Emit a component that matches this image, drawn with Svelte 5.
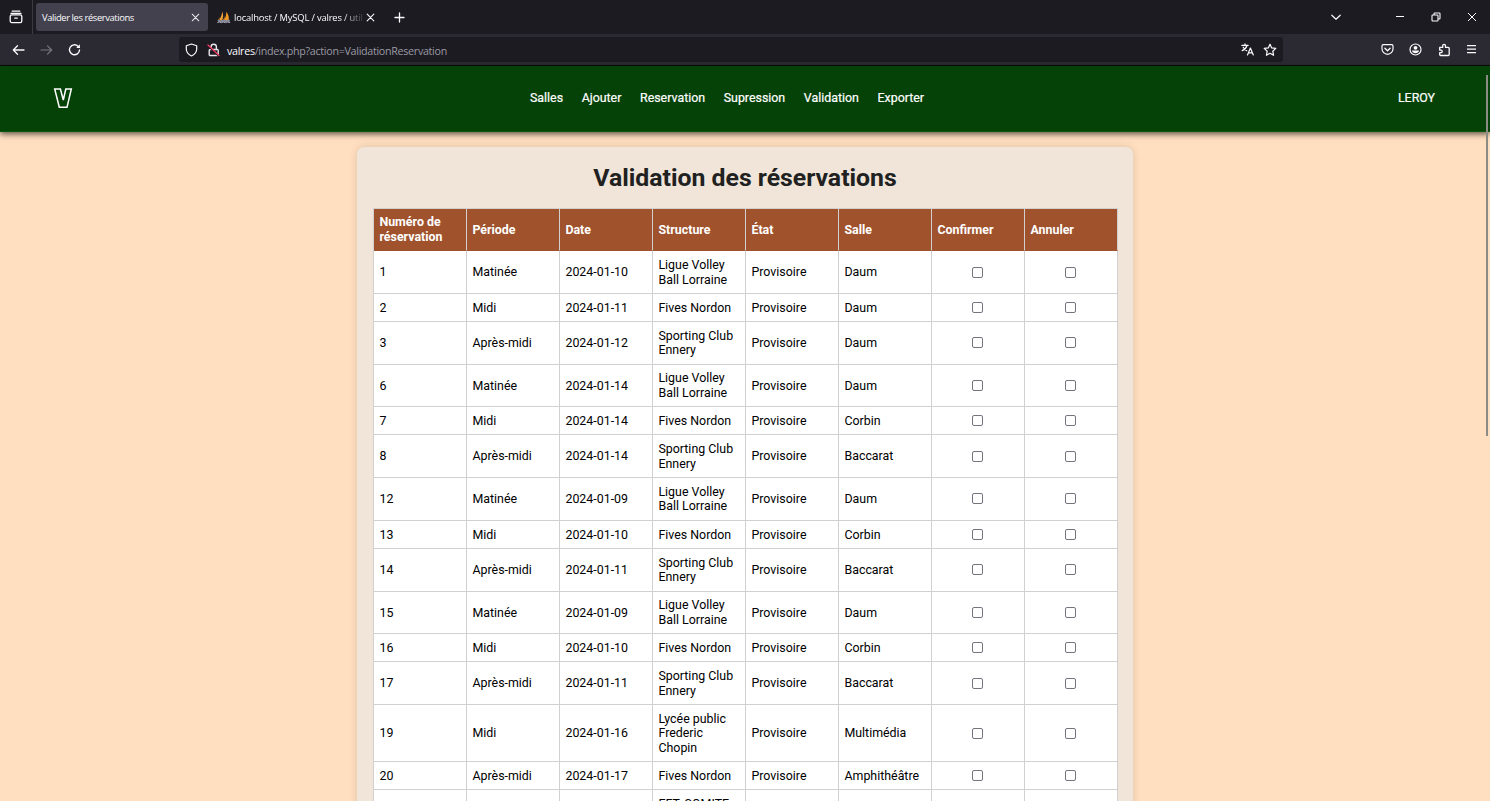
<script>
  const nav = ['Salles', 'Ajouter', 'Reservation', 'Supression', 'Validation', 'Exporter'];
  const heads = ['Numéro de réservation', 'Période', 'Date', 'Structure', 'État', 'Salle', 'Confirmer', 'Annuler'];
  const L = ['Ligue Volley', 'Ball Lorraine'];
  const F = ['Fives Nordon'];
  const S = ['Sporting Club', 'Ennery'];
  const rows = [
    ['1', 'Matinée', '2024-01-10', L, 'Daum'],
    ['2', 'Midi', '2024-01-11', F, 'Daum'],
    ['3', 'Après-midi', '2024-01-12', S, 'Daum'],
    ['6', 'Matinée', '2024-01-14', L, 'Daum'],
    ['7', 'Midi', '2024-01-14', F, 'Corbin'],
    ['8', 'Après-midi', '2024-01-14', S, 'Baccarat'],
    ['12', 'Matinée', '2024-01-09', L, 'Daum'],
    ['13', 'Midi', '2024-01-10', F, 'Corbin'],
    ['14', 'Après-midi', '2024-01-11', S, 'Baccarat'],
    ['15', 'Matinée', '2024-01-09', L, 'Daum'],
    ['16', 'Midi', '2024-01-10', F, 'Corbin'],
    ['17', 'Après-midi', '2024-01-11', S, 'Baccarat'],
    ['19', 'Midi', '2024-01-16', ['Lycée public', 'Frederic', 'Chopin'], 'Multimédia'],
    ['20', 'Après-midi', '2024-01-17', F, 'Amphithéâtre']
  ];
</script>

<div class="window">
  <div class="tabs">
    <div class="view">
      <svg width="14" height="14" viewBox="0 0 14 14" fill="none" stroke="#fbfbfe" stroke-width="1.3" stroke-linecap="round"><path d="M3.2 1.2h7.6M2 3.4h10" /><rect x="1.2" y="4.9" width="11.6" height="7.7" rx="1.6" /><path d="M5.8 8.2h2.4" /></svg>
    </div>
    <div class="tab active">
      <span class="label">Valider les réservations</span>
      <svg class="close" width="9" height="9" viewBox="0 0 9 9" stroke="#e8e8ee" stroke-width="1.05" stroke-linecap="round"><path d="M1.2 1.2l6.6 6.6M7.8 1.2L1.2 7.8" /></svg>
    </div>
    <div class="tab second">
      <svg class="fav" width="14" height="13" viewBox="0 0 14 13"><path d="M5.4.6C6.4 3.7 6.3 6.3 5.3 9.3l-3.2.2C3.6 7 4.9 4.2 5.4.6z" fill="#f0a23a" /><path d="M9.4.8c2.2 3 2.6 5.6 2.4 8.4L7 9C8.7 6.6 9.3 4 9.4.8z" fill="#f39a20" /><path d="M2.8 3.5C3 6 2 8 .7 9.4L2.4 9.3zM7.4 2.5c.2 2.5-.1 4.700-1.300 6.500l1.600.1z" fill="#d98a2c" /><path d="M.4 9.2l12.600-.4-.5 2.200H1.200z" fill="#85869a" /><path d="M.3 11.700l2-.7 2 .7 2-.7 2 .7 2-.7 2.800.7" fill="none" stroke="#a6a5af" /></svg>
      <span class="label fade">localhost / MySQL / valres / util</span>
      <svg class="close" width="9" height="9" viewBox="0 0 9 9" stroke="#fbfbfe" stroke-width="1.1" stroke-linecap="round"><path d="M1.2 1.2l6.6 6.6M7.8 1.2L1.2 7.8" /></svg>
    </div>
    <svg class="plus" width="11" height="11" viewBox="0 0 11 11" stroke="#fbfbfe" stroke-width="1.3" stroke-linecap="round"><path d="M5.5 1v9M1 5.5h9" /></svg>
    <div class="controls">
      <svg width="12" height="12" viewBox="0 0 12 12" fill="none" stroke="#fbfbfe" stroke-width="1.2" stroke-linecap="round" stroke-linejoin="round"><path d="M1.8 4.2L6 8.2l4.2-4" /></svg>
      <svg class="min" width="10" height="10" viewBox="0 0 10 10" stroke="#fbfbfe"><path d="M1 4.5h8" /></svg>
      <svg class="max" width="10" height="10" viewBox="0 0 10 10" fill="none" stroke="#fbfbfe" stroke-width="1.1"><rect x="1" y="3" width="6" height="6" rx=".8" /><path d="M3 3V1.8q0-.8.8-.8h4.4q.8 0 .8.8v4.4q0 .8-.8.8H7" /></svg>
      <svg class="quit" width="10" height="10" viewBox="0 0 10 10" stroke="#fbfbfe"><path d="M1 1l8 8M9 1L1 9" /></svg>
    </div>
  </div>

  <div class="toolbar">
    <svg class="back" width="13" height="12" viewBox="0 0 13 12" fill="none" stroke="#fbfbfe" stroke-width="1.3" stroke-linecap="round" stroke-linejoin="round"><path d="M12 6H1.3M5.5 1.8L1.3 6l4.2 4.2" /></svg>
    <svg class="fwd" width="13" height="12" viewBox="0 0 13 12" fill="none" stroke="#77767f" stroke-width="1.2" stroke-linecap="round" stroke-linejoin="round"><path d="M1 6h10.7M7.5 1.8L11.7 6l-4.2 4.2" /></svg>
    <svg class="reload" width="13" height="13" viewBox="0 0 13 13" fill="none" stroke="#fbfbfe" stroke-width="1.4" stroke-linecap="round"><path d="M11.5 7A5 5 0 1 1 10 3.2L11 4.2" /><path d="M11.9 1.2v3.7H8.2z" fill="#fbfbfe" stroke="none" /></svg>
    <div class="url">
      <svg class="shield" width="13" height="14" viewBox="0 0 13 14" fill="none" stroke="#fbfbfe" stroke-width="1.2" stroke-linejoin="round"><path d="M6.5 1L11.7 2.8V6c0 3-2 5.4-5.2 7C3.3 11.4 1.3 9 1.3 6V2.8z" /></svg>
      <svg class="lock" width="13" height="14" viewBox="0 0 13 14" fill="none" stroke="#e6e6ec" stroke-width="1.4"><path d="M4 6.500V4a2.700 2.700 0 0 1 5.400 0v2.500" /><rect x="2.200" y="6.500" width="9" height="6" rx="1" /><path d="M1 3l10.500 10" stroke="#1c1b22" stroke-width="1.300" /><path d="M1 2l11 10.500" stroke="#f03a60" stroke-width="1.300" stroke-linecap="round" /></svg>
      <span class="address"><b>valres</b>/index.php?action=ValidationReservation</span>
      <svg class="translate" width="13" height="13" viewBox="0 0 13 13" fill="none" stroke="#fbfbfe" stroke-width="1.2" stroke-linecap="round" stroke-linejoin="round"><path d="M.8 2.300h6.400M4 .8v1.500M6 2.500C5.400 4.800 3.500 6.600 1.200 7.600M2.200 4.200c.8 1.500 2 2.600 3.500 3.400M6.500 12L9.400 5l2.900 7M7.500 9.900h3.800" /></svg>
      <svg class="star" width="14" height="14" viewBox="0 0 14 14" fill="none" stroke="#fbfbfe" stroke-width="1.2" stroke-linejoin="round"><path d="M7 1.200l1.700 3.700 4.100.5-3 2.800.8 4.100L7 10.300l-3.600 2 .8-4.100-3-2.800 4.100-.5z" /></svg>
    </div>
    <div class="tools">
      <svg width="13" height="13" viewBox="0 0 13 13" fill="none" stroke="#fbfbfe" stroke-width="1.2" stroke-linecap="round" stroke-linejoin="round"><path d="M2.200 1.700h8.600q1.200 0 1.200 1.200v2.900a5.500 5.500 0 0 1-11 0V2.900q0-1.200 1.200-1.200z" /><path d="M3.900 5.200l2.600 2.500 2.600-2.500" stroke-width="1.4" /></svg>
      <svg width="13" height="13" viewBox="0 0 13 13" fill="none" stroke="#fbfbfe" stroke-width="1.2"><circle cx="6.5" cy="6.5" r="5.5" /><circle cx="6.5" cy="4.8" r="1.9" fill="#fbfbfe" stroke="none" /><path d="M3 7.500h7c0 1.600-1.600 2.800-3.500 2.800S3 9.100 3 7.500z" fill="#fbfbfe" stroke="none" /></svg>
      <svg width="13" height="14" viewBox="0 0 13 14" fill="none" stroke="#fbfbfe" stroke-width="1.3" stroke-linejoin="round"><path d="M1.700 4.400h3V2.700a1.400 1.400 0 0 1 2.800 0v1.700h2.700q1 0 1 1v6.100q0 1-1 1H2.700q-1 0-1-1V9.700h1.200a1.300 1.300 0 0 0 0-2.600H1.700z" /></svg>
      <svg width="11" height="11" viewBox="0 0 11 11" stroke="#fbfbfe" stroke-width="1.2"><path d="M1 1.700h9M1 5.200h9M1 8.700h9" /></svg>
    </div>
  </div>

  <div class="page">
    <header>
      <svg class="logo" width="22" height="24" viewBox="0 0 22 24" fill="none" stroke="#fff" stroke-width="1.5"><path d="M2.700 3h5.700l2.900 11 2.500-11h5.500L15 21.300H7.300z" /></svg>
      <nav>{#each nav as item}<span>{item}</span>{/each}</nav>
      <span class="user">LEROY</span>
    </header>
    <main>
      <section class="card">
        <h1>Validation des réservations</h1>
        <div class="grid">
          <div class="row head">
            {#each heads as h}<div class="cell">{h}</div>{/each}
          </div>
          {#each rows as [num, period, date, org, room]}
            <div class="row" class:double={org.length === 2} class:triple={org.length === 3}>
              <div class="cell">{num}</div>
              <div class="cell">{period}</div>
              <div class="cell">{date}</div>
              <div class="cell"><span>{#each org as line}<span class="line">{line}</span>{/each}</span></div>
              <div class="cell">Provisoire</div>
              <div class="cell">{room}</div>
              <div class="cell check"><i></i></div>
              <div class="cell check"><i></i></div>
            </div>
          {/each}
          <div class="row partial">
            <div class="cell"></div>
            <div class="cell"></div>
            <div class="cell"></div>
            <div class="cell">EFT, COMITE</div>
            <div class="cell"></div>
            <div class="cell"></div>
            <div class="cell"></div>
            <div class="cell"></div>
          </div>
        </div>
      </section>
    </main>
    <div class="scroll"></div>
  </div>
</div>

<style>
  :global(body) { margin: 0; overflow: hidden; }
  svg { display: block; flex: none; }
  .window { width: 1490px; height: 801px; overflow: hidden; display: flex; flex-direction: column; background: #ffdfbf; font-family: Roboto, sans-serif; }
  .tabs { height: 34px; flex: none; display: flex; align-items: center; background: #1c1b22; font: 500 9.4px "Open Sans", "Noto Sans", sans-serif; color: #fbfbfe; }
  .view { width: 33px; height: 34px; box-sizing: border-box; padding-left: 8.5px; display: flex; align-items: center; border-right: 1px solid #3a3944; margin-right: 3px; }
  .tab { display: flex; align-items: center; height: 28px; box-sizing: border-box; }
  .active { width: 172px; background: #42414d; border-radius: 3px; padding: 0 8px 0 6px; justify-content: space-between; letter-spacing: -.4px; }
  .label { white-space: nowrap; line-height: 14px; padding-top: 1px; }
  .second { width: 172px; padding-left: 9px; }
  .fade { width: 129px; margin-left: 3px; letter-spacing: -.17px; mask-image: linear-gradient(to right, #000 108px, transparent 132px); }
  .second .close { margin-left: 3px; }
  .plus { margin-left: 14px; }
  .controls { margin-left: auto; display: flex; align-items: center; padding-right: 13px; }
  .min { margin-left: 53px; }
  .max { margin-left: 26px; }
  .quit { margin-left: 26px; }
  .toolbar { height: 32px; flex: none; box-sizing: border-box; border-bottom: 1px solid #0c0c0d; display: flex; align-items: center; background: #2b2a33; padding-left: 12px; }
  .fwd { margin-left: 15px; }
  .reload { margin-left: 15px; }
  .url { width: 1104px; height: 25px; box-sizing: border-box; margin-left: 98px; padding: 0 6px; background: #1c1b22; border-radius: 3px; display: flex; align-items: center; }
  .lock { margin-left: 9px; }
  .address { font: 10.7px "Open Sans", "Noto Sans", sans-serif; letter-spacing: -.29px; color: #9b9aa2; margin-left: 7px; padding-top: 2px; white-space: nowrap; }
  .address b { font-weight: 500; color: #fbfbfe; }
  .translate { margin-left: auto; }
  .star { margin-left: 9px; }
  .tools { margin-left: auto; padding-right: 13px; display: flex; align-items: center; gap: 15.5px; }
  .page { position: relative; flex: 1; min-height: 0; }
  header { position: relative; height: 66px; box-sizing: border-box; padding: 0 55px 2px 52px; display: grid; grid-template-columns: 1fr auto 1fr; align-items: center; background: #054207; border-bottom: 1px solid #075808; box-shadow: 0 2px 6px rgba(0, 0, 0, .65); color: #fff; font-size: 12.4px; font-weight: 400; -webkit-text-stroke: .2px #fff; }
  nav { display: flex; gap: 18.6px; margin-right: 33px; }
  .user { justify-self: end; }
  main { display: flex; justify-content: center; padding-top: 15.4px; }
  .card { width: 776.5px; box-sizing: border-box; padding: 14.6px 16px; height: 720px; background: #f0e5d8; border-radius: 7px; box-shadow: 0 0 8px rgba(0, 0, 0, .14); }
  h1 { margin: 0 0 14px; font-size: 24.8px; line-height: 32px; text-align: center; font-weight: 700; color: #212121; }
  .grid { width: 745px; box-sizing: border-box; border-top: 1px solid #d3d0cd; border-left: 1px solid #d3d0cd; background: #fff; }
  .row { display: grid; grid-template-columns: repeat(8, 93px); height: 28.1px; font-size: 12.4px; line-height: 14.6px; color: #000; }
  .double { height: 42.7px; }
  .triple { height: 57.3px; }
  .head { height: 42.2px; background: #a0522d; color: #fff; font-weight: 700; }
  .cell { box-sizing: border-box; display: flex; align-items: center; border-right: 1px solid #d0d0d0; border-bottom: 1px solid #d0d0d0; padding: 1px 6px 0 5.7px; }
  .head .cell { border-bottom-color: #a0522d; }
  .partial { height: 57.3px; }
  .partial .cell { align-items: flex-start; padding-top: 7px; }
  .line { display: block; white-space: nowrap; }
  .check { justify-content: center; padding: 0 6px; }
  i { width: 11px; height: 11px; box-sizing: border-box; border: 1px solid #74737e; border-radius: 2px; background: #fff; }
  .scroll { position: absolute; right: 2px; top: 9px; width: 2px; height: 361px; background: #8c8c86; }
</style>
